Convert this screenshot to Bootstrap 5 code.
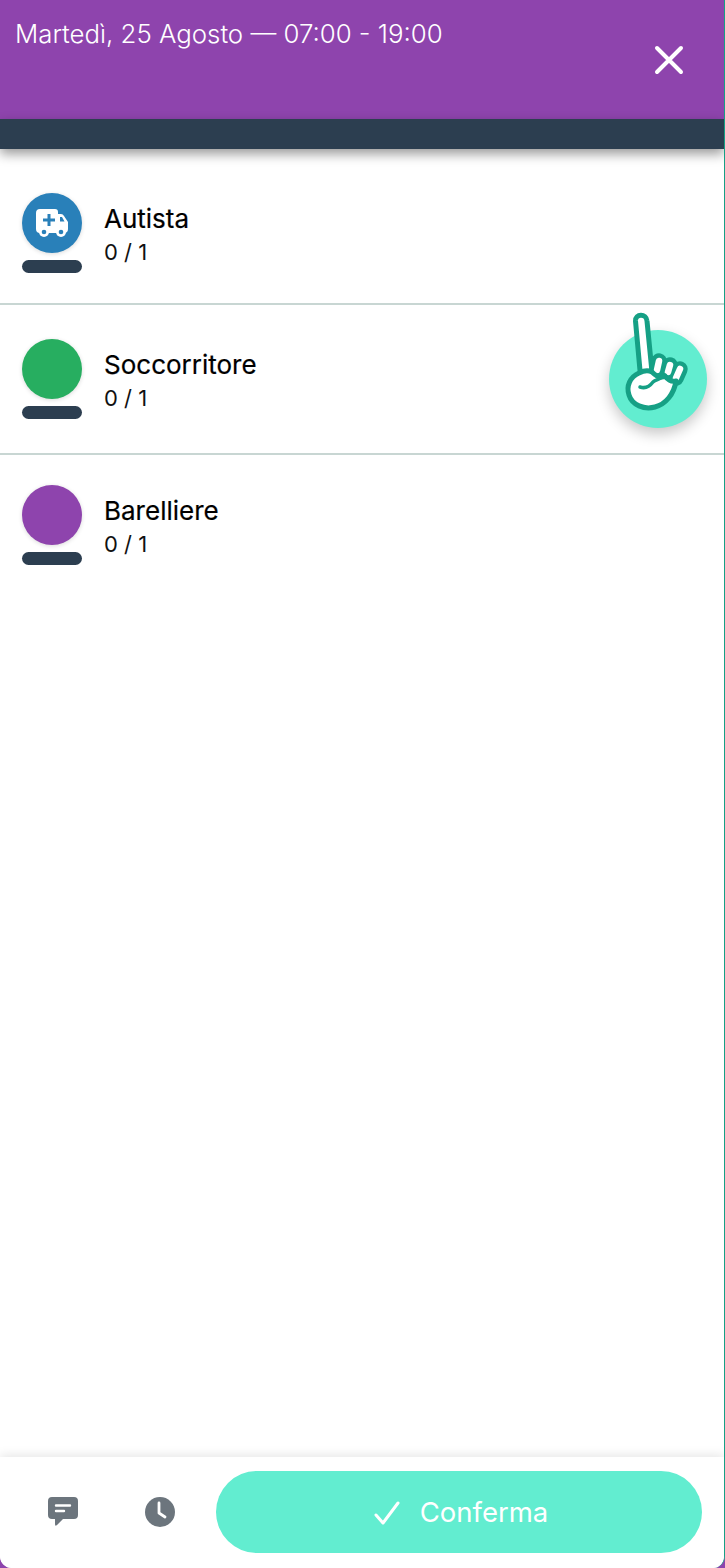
<!DOCTYPE html>
<html lang="it">
  <head>
    <meta charset="UTF-8" />
    <meta name="viewport" content="width=device-width, initial-scale=1" />
    <title>Turno</title>
    <link href="https://cdn.jsdelivr.net/npm/bootstrap@5.3.0/dist/css/bootstrap.min.css" rel="stylesheet" />
    <script defer src="https://cdn.jsdelivr.net/npm/bootstrap@5.3.0/dist/js/bootstrap.bundle.min.js"></script>
    <style>
      html, body { height: 100%; }
      body {
        font-family: Inter, "Liberation Sans", sans-serif;
        background: #8e44ad;
      }
      .sheet {
        height: 1568px;
        background: #fff;
        border-bottom-left-radius: 12px;
        border-bottom-right-radius: 12px;
        border-right: 1px solid #16a085;
        overflow: hidden;
      }
      .head-top {
        height: 119px;
        background: #8e44ad;
        color: #fff;
        padding: 18px 15px 0;
        font-size: 25.8px;
        font-weight: 300;
        line-height: 32px;
      }
      .head-close { top: 45px; right: 40px; line-height: 0; }
      .head-bar {
        height: 30px;
        background: #2c3e50;
        box-shadow: 0 5px 12px rgba(0, 0, 0, 0.4);
      }
      .role-list { padding-top: 14px; }
      .role-row {
        padding: 30px 22px;
        border-bottom: 2px solid #c8d6d3;
        gap: 22px;
      }
      .role-row:nth-child(2) { padding-top: 34px; padding-bottom: 34px; }
      .role-row:last-child { border-bottom: 0; }
      .role-pic { width: 60px; }
      .role-dot {
        width: 60px;
        height: 60px;
        border-radius: 50%;
        box-shadow: 0 1px 4px rgba(0, 0, 0, 0.15);
      }
      .role-stand {
        width: 60px;
        height: 13px;
        margin-top: 7px;
        border-radius: 7px;
        background: #2c3e50;
      }
      .role-name { font-size: 26px; font-weight: 400; line-height: 30px; color: #000; margin-top: 11px; -webkit-text-stroke: 0.2px #000; }
      .role-count { font-size: 22px; line-height: 26px; color: #111; margin-top: 5px; }
      .hand-btn {
        width: 98px;
        height: 98px;
        left: 609px;
        top: 330px;
        border-radius: 50%;
        background: #62edd0;
        box-shadow: 0 6px 14px rgba(0, 0, 0, 0.22);
      }
      .hand-pic { left: 622px; top: 310px; }
      .foot-bar {
        height: 111px;
        left: 0;
        right: 0;
        bottom: 0;
        background: #fff;
        box-shadow: 0 -2px 10px rgba(0, 0, 0, 0.1);
        padding: 14px 22px 0 15px;
      }
      .foot-icon { width: 96px; height: 82px; }
      .foot-clock { margin-left: 1px; }
      .ok-btn {
        height: 82px;
        margin-left: 8px;
        padding: 2px 0 0 4px;
        border-radius: 41px;
        background: #62edd0;
        color: #fff;
        font-size: 27.5px;
        gap: 20px;
        border: 0;
      }
    </style>
  </head>
  <body>
    <div class="sheet position-relative">
      <header class="position-relative">
        <div class="head-top">Martedì, 25 Agosto — 07:00 - 19:00</div>
        <div class="head-close position-absolute">
          <svg width="30" height="30" viewBox="0 0 30 30" fill="none" stroke="#fff" stroke-width="4" stroke-linecap="round">
            <path d="M3 3 L27 27 M27 3 L3 27" />
          </svg>
        </div>
        <div class="head-bar"></div>
      </header>

      <main class="role-list">
        <div class="role-row d-flex">
          <div class="role-pic">
            <div class="role-dot d-flex align-items-center justify-content-center" style="background: #2980b9">
              <svg width="32" height="28" viewBox="0 0 32 28">
                <path fill="#fff" d="M4 0 H19 Q22 0 22 3 V5 H25 Q27 5 28 7 L32 13 V20 Q32 24 28 24 H4 Q0 24 0 20 V4 Q0 0 4 0 Z" />
                <path fill="#2980b9" d="M11.5 5 H14.5 V9.500 H19 V12.500 H14.500 V17 H11.500 V12.500 H7 V9.500 H11.500 Z M24 8 H26 L28.500 12.500 H24 Z" />
                <circle cx="8" cy="23" r="5" fill="#fff" />
                <circle cx="25" cy="23" r="5" fill="#fff" />
                <circle cx="8" cy="23" r="2.300" fill="#2980b9" />
                <circle cx="25" cy="23" r="2.300" fill="#2980b9" />
              </svg>
            </div>
            <div class="role-stand"></div>
          </div>
          <div>
            <div class="role-name">Autista</div>
            <div class="role-count">0 / 1</div>
          </div>
        </div>
        <div class="role-row d-flex">
          <div class="role-pic">
            <div class="role-dot" style="background: #27ae60"></div>
            <div class="role-stand"></div>
          </div>
          <div>
            <div class="role-name">Soccorritore</div>
            <div class="role-count">0 / 1</div>
          </div>
        </div>
        <div class="role-row d-flex">
          <div class="role-pic">
            <div class="role-dot" style="background: #8e44ad"></div>
            <div class="role-stand"></div>
          </div>
          <div>
            <div class="role-name">Barelliere</div>
            <div class="role-count">0 / 1</div>
          </div>
        </div>
      </main>

      <div class="hand-btn position-absolute"></div>
      <svg class="hand-pic position-absolute" width="70" height="106" viewBox="0 0 70 106" stroke-linecap="round" stroke-linejoin="round">
        <path d="M13.500 11 C13 3.500 24.500 3 25 11 L30 62 L18.500 66 Z" fill="#fff" stroke="#16a085" stroke-width="5" />
        <path d="M35 60 L37 51 M46 62 L48 55 M54 68 L58 59" stroke="#16a085" stroke-width="15.500" />
        <path d="M35 60 L37 51 M46 62 L48 55 M54 68 L58 59" stroke="#fff" stroke-width="6.500" />
        <path d="M17 63 C8 67 4 76 7 85 C10 95 22 100 33 97 C44 94 52 84 54 71 C50 72 46 70 43 66 C38 69 34 66 30 62 C26 60 21 61 17 63 Z" fill="#fff" stroke="#16a085" stroke-width="5" />
        <path d="M18 77 C24 79 28 76 31 72 C34 69 38 70 43 65" fill="none" stroke="#16a085" stroke-width="3.500" />
      </svg>

      <footer class="foot-bar position-absolute d-flex">
        <div class="foot-icon d-flex align-items-center justify-content-center flex-shrink-0">
          <svg width="30" height="30" viewBox="0 0 30 30">
            <path fill="#6c757d" d="M4 0 H26 Q30 0 30 4 V18 Q30 22 26 22 H15 L9 28 Q7 30 7 27 V22 H4 Q0 22 0 18 V4 Q0 0 4 0 Z" />
            <path d="M8 8.500 H22 M8 14 H16" stroke="#fff" stroke-width="2.400" stroke-linecap="round" />
          </svg>
        </div>
        <div class="foot-icon foot-clock d-flex align-items-center justify-content-center flex-shrink-0">
          <svg width="30" height="30" viewBox="0 0 30 30">
            <circle cx="15" cy="15" r="15" fill="#6c757d" />
            <path d="M14 6 V16 L20 20" fill="none" stroke="#fff" stroke-width="2.800" stroke-linecap="round" stroke-linejoin="round" />
          </svg>
        </div>
        <button class="ok-btn btn flex-grow-1 d-flex align-items-center justify-content-center">
          <svg width="26" height="24" viewBox="0 0 26 24" fill="none" stroke="#fff" stroke-width="3" stroke-linecap="round" stroke-linejoin="round">
            <path d="M2 14 L9 22 L24 2" />
          </svg>
          Conferma
        </button>
      </footer>
    </div>
  </body>
</html>
